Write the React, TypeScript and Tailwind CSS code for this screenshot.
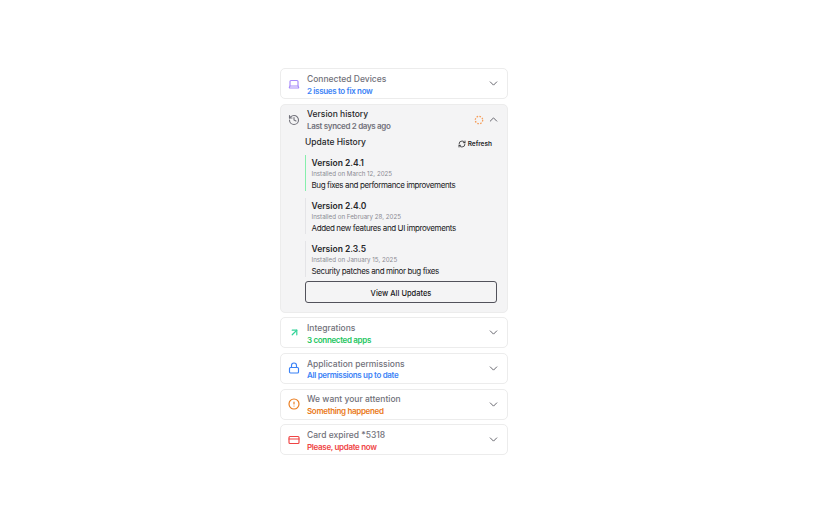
import React from "react";
import {ChevronDown, ChevronUp, CreditCard, History, Laptop, Lock, CircleAlert, ArrowUpRight, RefreshCw} from "lucide-react";

const font = {fontFamily: '"Inter", "Liberation Sans", sans-serif'};

function Row({icon, title, sub, subClass}: {
    icon: React.ReactNode;
    title: string;
    sub: string;
    subClass: string;
}) {
    return (
        <div className="h-[31px] rounded-[5px] border border-[#ececec] bg-white flex items-center pl-[7px] pr-[7px]">
            <div className="w-[12px] flex justify-center">{icon}</div>
            <div className="ml-[7px] flex-1 flex flex-col gap-[0.5px] pt-[3px]">
                <div className="text-[8.5px] leading-[11px] font-medium text-[#71717a]">{title}</div>
                <div className={`text-[8px] leading-[11px] font-semibold tracking-[-0.33px] ${subClass}`}>{sub}</div>
            </div>
            <ChevronDown className="w-[13px] h-[13px] text-[#63636b]" strokeWidth={1.8}/>
        </div>
    );
}

function Version({name, date, text, line}: {
    name: string;
    date: string;
    text: string;
    line: string;
}) {
    return (
        <div className={`h-[36px] border-l pl-[5.5px] flex flex-col pt-[2px] ${line}`}>
            <div className="text-[8.5px] leading-[12px] font-semibold text-[#27272a]">{name}</div>
            <div className="text-[6.2px] leading-[10px] text-[#8a8a92]">{date}</div>
            <div className="text-[8px] leading-[11px] mt-[1px] tracking-[-0.38px] text-[#18181b]">{text}</div>
        </div>
    );
}

export default function App() {
    return (
        <div className="w-[828px] h-[518px] bg-white pt-[68.3px] pl-[280px]" style={font}>
            <div className="w-[228px] flex flex-col gap-[4.7px]">
                <Row icon={<Laptop className="w-[12px] h-[12px] text-[#a78bfa]" strokeWidth={2.3}/>} title="Connected Devices"
                     sub="2 issues to fix now" subClass="text-[#3b82f6]"/>

                <div className="h-[208.6px] rounded-[5px] border border-[#ececec] bg-[#f4f4f5] flex flex-col">
                    <div className="flex items-center h-[30px] pl-[7px] pr-[7px] shrink-0">
                        <div className="w-[12px] flex justify-center">
                            <History className="w-[12px] h-[12px] text-[#71717a]" strokeWidth={2.2}/>
                        </div>
                        <div className="ml-[7px] flex-1 flex flex-col gap-[1px] pt-[2px]">
                            <div className="text-[8.5px] leading-[11px] font-medium text-[#27272a]">Version history</div>
                            <div className="text-[8px] leading-[11px] font-semibold tracking-[-0.33px] text-[#71717a]">Last synced 2 days ago</div>
                        </div>
                        <svg className="w-[10px] h-[10px] mr-[3px]" viewBox="0 0 10 10" fill="none">
                            <circle cx="5" cy="5" r="3.7" stroke="#f59e5b" strokeWidth="1.3" strokeDasharray="1.6 1.3"/>
                        </svg>
                        <ChevronUp className="w-[13px] h-[13px] text-[#63636b]" strokeWidth={1.8}/>
                    </div>
                    <div className="pl-[24px] pr-[10px] flex-1 flex flex-col">
                        <div className="flex items-center justify-between h-[12px] mt-[1px] mb-[7px]">
                            <div className="text-[8.5px] font-medium text-[#27272a]">Update History</div>
                            <div className="flex items-center gap-[2px] pr-[5px] pt-[4px] text-[6.5px] leading-[8px] font-semibold text-[#27272a]">
                                <RefreshCw className="w-[8px] h-[8px]" strokeWidth={2.4}/>
                                Refresh
                            </div>
                        </div>
                        <div className="flex flex-col gap-[7px]">
                            <Version name="Version 2.4.1" date="Installed on March 12, 2025"
                                     text="Bug fixes and performance improvements" line="border-[#86efac]"/>
                            <Version name="Version 2.4.0" date="Installed on February 28, 2025"
                                     text="Added new features and UI improvements" line="border-[#e4e4e7]"/>
                            <Version name="Version 2.3.5" date="Installed on January 15, 2025"
                                     text="Security patches and minor bug fixes" line="border-[#e4e4e7]"/>
                        </div>
                        <div className="mt-[4px] h-[22px] pt-[3px] rounded-[3px] border border-[#52525b] flex items-center justify-center text-[7.5px] font-medium text-[#18181b]">
                            View All Updates
                        </div>
                    </div>
                </div>

                <Row icon={<ArrowUpRight className="w-[11px] h-[11px] text-[#34d399]" strokeWidth={2.6}/>} title="Integrations"
                     sub="3 connected apps" subClass="text-[#22c55e]"/>
                <Row icon={<Lock className="w-[12px] h-[12px] text-[#3b82f6]" strokeWidth={2.3}/>} title="Application permissions"
                     sub="All permissions up to date" subClass="text-[#3b82f6]"/>
                <Row icon={<CircleAlert className="w-[12px] h-[12px] text-[#ea7a1a]" strokeWidth={2.3}/>} title="We want your attention"
                     sub="Something happened" subClass="text-[#ea7a1a]"/>
                <Row icon={<CreditCard className="w-[12px] h-[12px] text-[#ef4444]" strokeWidth={2.3}/>} title="Card expired *5318"
                     sub="Please, update now" subClass="text-[#ef4444]"/>
            </div>
        </div>
    );
}
